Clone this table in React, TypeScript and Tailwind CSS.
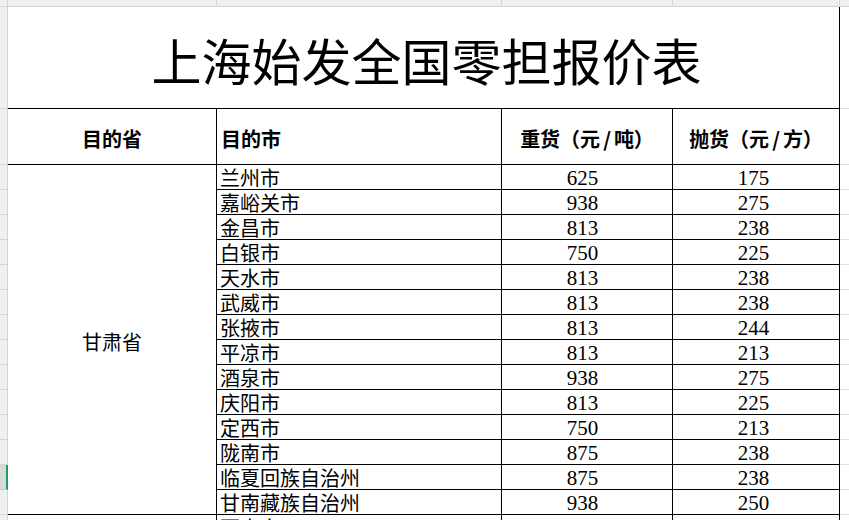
import React from "react";

const rows: [string, string, string][] = [
  ["兰州市", "625", "175"],
  ["嘉峪关市", "938", "275"],
  ["金昌市", "813", "238"],
  ["白银市", "750", "225"],
  ["天水市", "813", "238"],
  ["武威市", "813", "238"],
  ["张掖市", "813", "244"],
  ["平凉市", "813", "213"],
  ["酒泉市", "938", "275"],
  ["庆阳市", "813", "225"],
  ["定西市", "750", "213"],
  ["陇南市", "875", "238"],
  ["临夏回族自治州", "875", "238"],
  ["甘南藏族自治州", "938", "250"],
];

const cjk = { fontFamily: '"Noto Sans CJK SC", "Noto Sans", sans-serif' };
const num = { fontFamily: '"Liberation Serif", "Noto Sans CJK SC", serif' };

export default function App() {
  return (
    <div className="w-[849px] h-[520px] overflow-hidden bg-white text-black" style={cjk}>
      {/* column header strip */}
      <div className="flex h-[7px]">
        <div className="w-[8px] shrink-0 bg-[#f0f0f0] border-r border-b border-[#d4d4d4]" />
        <div className="w-[209px] shrink-0 bg-[#f0f0f0] border-r border-b border-[#d4d4d4]" />
        <div className="w-[285px] shrink-0 bg-[#f0f0f0] border-r border-b border-[#d4d4d4]" />
        <div className="w-[171px] shrink-0 bg-[#f0f0f0] border-r border-b border-[#d4d4d4]" />
        <div className="w-[167px] shrink-0 bg-[#f0f0f0] border-r border-b border-[#d4d4d4]" />
        <div className="flex-1 bg-[#f0f0f0] border-b border-[#d4d4d4]" />
      </div>

      <div className="flex">
        {/* row header strip */}
        <div className="w-[8px] shrink-0 flex flex-col">
          <div className="h-[102px] bg-[#f0f0f0] border-r border-b border-[#d4d4d4]" />
          <div className="h-[56px] bg-[#f0f0f0] border-r border-b border-[#d4d4d4]" />
          {rows.map((r, i) =>
            i === 12 ? (
              <div key={r[0]} className="h-[25px] bg-[#d9d9d9] border-r-2 border-r-[#1f9d5c] border-b border-b-[#c8c8c8]" />
            ) : (
              <div key={r[0]} className="h-[25px] bg-[#f0f0f0] border-r border-b border-[#d4d4d4]" />
            )
          )}
          <div className="h-[25px] bg-[#f0f0f0] border-r border-[#d4d4d4]" />
        </div>

        {/* table */}
        <div className="w-[832px] shrink-0 flex flex-col">
          <div className="h-[102px] border-r border-b border-black flex items-center justify-center pt-[2px] pl-[6px]">
            <span className="text-[50px] leading-[50px] whitespace-nowrap">上海始发全国零担报价表</span>
          </div>

          <div className="h-[56px] flex font-bold text-[20px] leading-[20px]">
            <div className="w-[209px] shrink-0 border-r border-b border-black flex items-center justify-center pt-[4px]">目的省</div>
            <div className="w-[285px] shrink-0 border-r border-b border-black flex items-center pl-[4px] pt-[4px]">目的市</div>
            <div className="w-[171px] shrink-0 border-r border-b border-black flex items-center justify-center pt-[4px] whitespace-nowrap">
              重货（元<span className="px-[3px]">/</span>吨）
            </div>
            <div className="w-[167px] shrink-0 border-r border-b border-black flex items-center justify-center pt-[4px] whitespace-nowrap">
              抛货（元<span className="px-[3px]">/</span>方）
            </div>
          </div>

          <div className="flex">
            <div className="w-[209px] h-[350px] shrink-0 border-r border-b border-black flex items-center justify-center pt-[4px] text-[20px] leading-[20px]">
              甘肃省
            </div>
            <div className="flex flex-col">
              {rows.map((r) => (
                <div key={r[0]} className="h-[25px] flex">
                  <div className="w-[285px] h-[25px] shrink-0 border-r border-b border-black pl-[3px] pt-[3px] text-[20px] leading-[20px] whitespace-nowrap">
                    {r[0]}
                  </div>
                  <div className="w-[171px] h-[25px] shrink-0 border-r border-b border-black text-center pr-[9px] pt-[3px] text-[21px] leading-[21px]" style={num}>
                    {r[1]}
                  </div>
                  <div className="w-[167px] h-[25px] shrink-0 border-r border-b border-black text-center pr-[5px] pt-[3px] text-[21px] leading-[21px]" style={num}>
                    {r[2]}
                  </div>
                </div>
              ))}
            </div>
          </div>

          <div className="h-[25px] flex">
            <div className="w-[209px] shrink-0 border-r border-black" />
            <div className="w-[285px] shrink-0 border-r border-black pl-[3px] pt-[3px] text-[20px] leading-[20px]">西宁市</div>
            <div className="w-[171px] shrink-0 border-r border-black" />
            <div className="w-[167px] shrink-0 border-r border-black" />
          </div>
        </div>

        {/* next empty column gridlines */}
        <div className="flex-1 flex flex-col">
          <div className="h-[102px] border-b border-[#e0e0e0]" />
          <div className="h-[56px] border-b border-[#e0e0e0]" />
          {rows.map((r) => (
            <div key={r[0]} className="h-[25px] border-b border-[#e0e0e0]" />
          ))}
        </div>
      </div>
    </div>
  );
}
